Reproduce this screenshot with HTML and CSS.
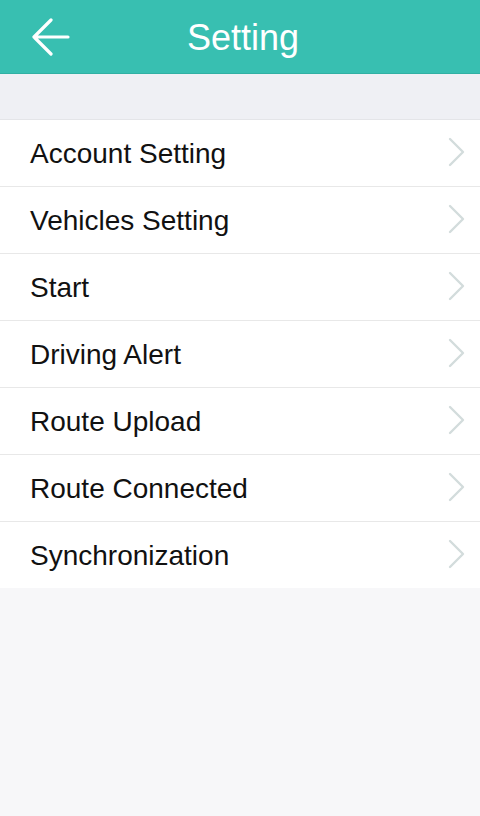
FILE: index.html
```html
<!DOCTYPE html>
<html>
<head>
<meta charset="utf-8">
<link rel="stylesheet" href="styles.css">
</head>
<body>
	<div id="tela">
		<div class="cabecalho">
			<button class="voltar">
				<svg width="40" height="38" viewBox="0 0 40 38"><path d="M20 2 L3 19 L20 36 M3 19 L37 19" fill="none" stroke="#fff" stroke-width="3.2" stroke-linecap="round" stroke-linejoin="round"/></svg>
			</button>
			<h1 class="titulo">Setting</h1>
		</div>
		<div class="faixa"></div>
		<ul class="lista">
			<li class="item"><span>Account Setting</span><svg class="seta" width="18" height="30" viewBox="0 0 18 30"><path d="M2 2 L15 15 L2 28" fill="none" stroke="#d3dcdc" stroke-width="2.4" stroke-linecap="round" stroke-linejoin="round"/></svg></li>
			<li class="item"><span>Vehicles Setting</span><svg class="seta" width="18" height="30" viewBox="0 0 18 30"><path d="M2 2 L15 15 L2 28" fill="none" stroke="#d3dcdc" stroke-width="2.4" stroke-linecap="round" stroke-linejoin="round"/></svg></li>
			<li class="item"><span>Start</span><svg class="seta" width="18" height="30" viewBox="0 0 18 30"><path d="M2 2 L15 15 L2 28" fill="none" stroke="#d3dcdc" stroke-width="2.4" stroke-linecap="round" stroke-linejoin="round"/></svg></li>
			<li class="item"><span>Driving Alert</span><svg class="seta" width="18" height="30" viewBox="0 0 18 30"><path d="M2 2 L15 15 L2 28" fill="none" stroke="#d3dcdc" stroke-width="2.4" stroke-linecap="round" stroke-linejoin="round"/></svg></li>
			<li class="item"><span>Route Upload</span><svg class="seta" width="18" height="30" viewBox="0 0 18 30"><path d="M2 2 L15 15 L2 28" fill="none" stroke="#d3dcdc" stroke-width="2.4" stroke-linecap="round" stroke-linejoin="round"/></svg></li>
			<li class="item"><span>Route Connected</span><svg class="seta" width="18" height="30" viewBox="0 0 18 30"><path d="M2 2 L15 15 L2 28" fill="none" stroke="#d3dcdc" stroke-width="2.4" stroke-linecap="round" stroke-linejoin="round"/></svg></li>
			<li class="item"><span>Synchronization</span><svg class="seta" width="18" height="30" viewBox="0 0 18 30"><path d="M2 2 L15 15 L2 28" fill="none" stroke="#d3dcdc" stroke-width="2.4" stroke-linecap="round" stroke-linejoin="round"/></svg></li>
		</ul>
	</div>
</body>
</html>
```

FILE: styles.css
```css
body{
	margin: 0;
	background-color: #f7f7f9;
	font-family: "Liberation Sans", Arial, sans-serif;
}

#tela{
	width: 480px;
	min-height: 816px;
}

.cabecalho{
	height: 73px;
	background-color: #38bfb1;
	border-bottom: 1px solid #31b0a3;
	display: flex;
	align-items: center;
	position: relative;
}

.voltar{
	border: none;
	background: none;
	padding: 0;
	margin-left: 31px;
	margin-top: 1px;
	display: flex;
}

.titulo{
	position: absolute;
	left: 0;
	right: 0;
	top: 0;
	margin: 0;
	text-align: center;
	line-height: 76px;
	font-size: 36px;
	font-weight: normal;
	color: #fff;
	pointer-events: none;
	padding-left: 6px;
}

.faixa{
	height: 45px;
	background-color: #eff0f4;
	border-bottom: 1px solid #e4e5e8;
}

.lista{
	list-style: none;
	margin: 0;
	padding: 0;
	background-color: #fff;
}

.item{
	height: 66px;
	border-bottom: 1px solid #e8e8e8;
	display: flex;
	align-items: center;
	justify-content: space-between;
	padding: 0 14px 0 30px;
	font-size: 28px;
	color: #111;
}

.item:last-child{
	border-bottom: none;
}

.item span{
	margin-top: 2px;
}

.seta{
	margin-top: -2px;
}
```
